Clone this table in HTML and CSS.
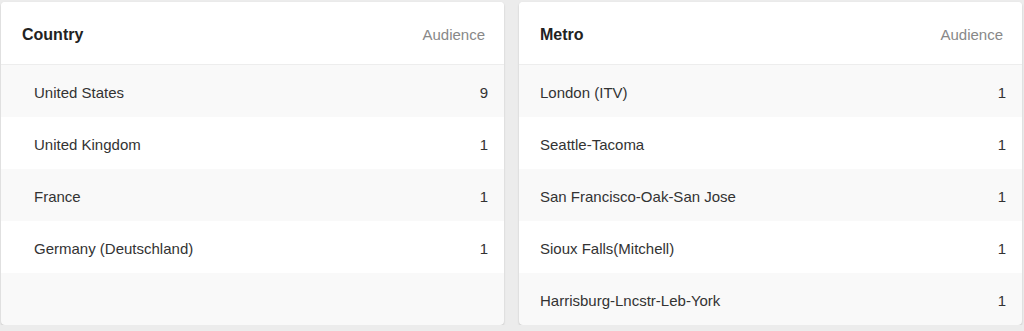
FILE: index.html
```html
<!DOCTYPE html>
<html>
<head>
<meta charset="utf-8">
<link rel="stylesheet" href="styles.css">
</head>
<body>
<div class="grid">
  <section class="card">
    <div class="card-head">
      <span class="title">Country</span>
      <span class="col">Audience</span>
    </div>
    <div class="rows indent">
      <div class="row"><span>United States</span><span>9</span></div>
      <div class="row"><span>United Kingdom</span><span>1</span></div>
      <div class="row"><span>France</span><span>1</span></div>
      <div class="row"><span>Germany (Deutschland)</span><span>1</span></div>
    </div>
  </section>
  <section class="card">
    <div class="card-head">
      <span class="title">Metro</span>
      <span class="col">Audience</span>
    </div>
    <div class="rows">
      <div class="row"><span>London (ITV)</span><span>1</span></div>
      <div class="row"><span>Seattle-Tacoma</span><span>1</span></div>
      <div class="row"><span>San Francisco-Oak-San Jose</span><span>1</span></div>
      <div class="row"><span>Sioux Falls(Mitchell)</span><span>1</span></div>
      <div class="row"><span>Harrisburg-Lncstr-Leb-York</span><span>1</span></div>
    </div>
  </section>
</div>
</body>
</html>
```

FILE: styles.css
```css
html, body {
  margin: 0;
  padding: 0;
  background: #ececec;
  font-family: "Liberation Sans", Arial, sans-serif;
  color: #333;
}
.grid {
  display: grid;
  grid-template-columns: 503px 503px;
  column-gap: 15px;
  padding: 2px 2px 0 1px;
}
.card {
  background: #f9f9f9;
  border-radius: 4px;
  box-shadow: 0 1px 2px rgba(0,0,0,0.18);
  height: 323px;
  overflow: hidden;
  display: flex;
  flex-direction: column;
}
.card-head {
  box-sizing: border-box;
  height: 63px;
  padding: 3px 19px 0 21px;
  background: #fff;
  border-bottom: 1px solid #ededed;
  display: flex;
  align-items: center;
  justify-content: space-between;
  flex: none;
}
.title {
  font-size: 16px;
  font-weight: bold;
  color: #222;
}
.col {
  font-size: 15px;
  color: #888;
}
.rows {
  display: flex;
  flex-direction: column;
}
.row {
  box-sizing: border-box;
  height: 52px;
  padding: 3px 16px 0 21px;
  display: flex;
  align-items: center;
  justify-content: space-between;
  font-size: 15px;
  color: #333;
}
.rows.indent .row {
  padding-left: 33px;
}
.row:nth-child(even) {
  background: #fff;
}
```
